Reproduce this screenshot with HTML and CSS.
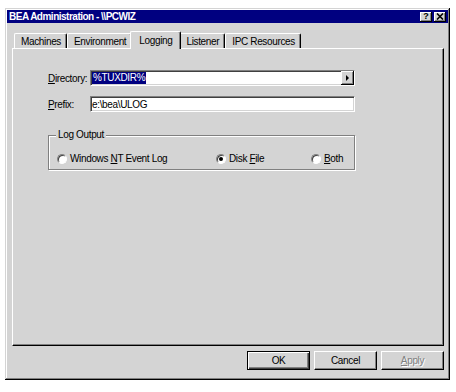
FILE: index.html
```html
<!DOCTYPE html>
<html lang="en">
<head>
  <meta charset="UTF-8" />
  <title>BEA Administration</title>
  <link rel="stylesheet" href="styles.css">
</head>
<body>

  <div class="window">
    <div class="titlebar">
      <span>BEA Administration - \\PCWIZ</span>
      <div class="title-btns">
        <span class="tbtn">?</span>
        <span class="tbtn">
          <svg width="8" height="7" viewBox="0 0 8 7"><path d="M1 0.5 L7 6.5 M7 0.5 L1 6.5" stroke="#000" stroke-width="1.6"/></svg>
        </span>
      </div>
    </div>

    <div class="content">
      <div class="tabs">
        <div class="tab">Machines</div>
        <div class="tab">Environment</div>
        <div class="tab active">Logging</div>
        <div class="tab">Listener</div>
        <div class="tab">IPC Resources</div>
      </div>

      <div class="panel">
        <div class="row">
          <span class="label"><u>D</u>irectory:</span>
          <div class="field">
            <span class="sel">%TUXDIR%</span>
            <span class="drop"><span class="arrow"></span></span>
          </div>
        </div>
        <div class="row">
          <span class="label"><u>P</u>refix:</span>
          <div class="field">e:\bea\ULOG</div>
        </div>

        <div class="group">
          <span class="legend">Log Output</span>
          <label class="opt"><span class="radio"></span><span>Windows <u>N</u>T Event Log</span></label>
          <label class="opt"><span class="radio checked"></span><span>Disk <u>F</u>ile</span></label>
          <label class="opt"><span class="radio"></span><span><u>B</u>oth</span></label>
        </div>
      </div>

      <div class="actions">
        <button class="btn default">OK</button>
        <button class="btn">Cancel</button>
        <button class="btn disabled"><u>A</u>pply</button>
      </div>
    </div>
  </div>

</body>
</html>
```

FILE: styles.css
```css
* { margin: 0; padding: 0; box-sizing: border-box; }
body { background: #fff; font-family: 'Liberation Sans', Arial, sans-serif; font-size: 10px; letter-spacing: -0.35px; color: #000; }

.window {
  width: 445px; height: 372px; margin: 8px 0 0 5px; padding: 2px; background: #d4d4d4;
  box-shadow: inset -1px -1px #000, inset 1px 1px #d4d4d4, inset -2px -2px #808080, inset 2px 2px #fff;
  display: flex; flex-direction: column;
}
.titlebar {
  height: 13px; background: #000080; color: #fff; font-weight: bold; padding: 0 2px 0 2px;
  display: flex; align-items: center; justify-content: space-between; letter-spacing: -0.5px;
}
.title-btns { display: flex; gap: 2px; }
.tbtn {
  width: 12px; height: 10px; background: #d4d4d4; color: #000; font-size: 9px; line-height: 1; letter-spacing: 0;
  box-shadow: inset -1px -1px #000, inset 1px 1px #fff, inset -2px -2px #808080;
  display: flex; align-items: center; justify-content: center;
}

.content { flex: 1; display: flex; flex-direction: column; padding: 8px 4px 0 5px; }

.tabs { display: flex; align-items: flex-end; height: 17px; padding-left: 2px; position: relative; z-index: 1; }
.tab {
  height: 15px; padding: 0 5px 0 6px; border: 1px solid #fff; border-right-color: #000; border-bottom: 0;
  border-radius: 2px 2px 0 0; box-shadow: inset -1px 0 #808080; background: #d4d4d4;
  display: flex; align-items: center;
}
.tab.active { height: 18px; margin: 0 -2px -1px; padding: 0 8px; position: relative; z-index: 1; }

.panel {
  height: 298px; background: #d4d4d4; padding: 21px 0 0 35px;
  border: 1px solid; border-color: #fff #000 #000 #fff; box-shadow: inset -1px -1px #808080;
}

.row { display: flex; align-items: center; height: 16px; }
.row + .row { margin-top: 10px; }
.label { width: 42px; }
.field {
  width: 265px; height: 16px; background: #fff; padding-left: 1px;
  border: 1px solid; border-color: #808080 #fff #fff #808080;
  box-shadow: inset 1px 1px #404040, inset -1px -1px #d4d4d4;
  display: flex; align-items: center;
}
.sel { background: #000080; color: #fff; padding: 0 1px; line-height: 12px; }
.drop {
  margin-left: auto; width: 13px; height: 14px; background: #d4d4d4;
  box-shadow: inset -1px -1px #000, inset 1px 1px #fff, inset -2px -2px #808080;
  display: flex; align-items: center; justify-content: center;
}
.arrow { border-left: 3px solid #000; border-top: 3px solid transparent; border-bottom: 3px solid transparent; }

.group {
  position: relative; width: 307px; height: 35px; margin-top: 23px; padding: 12px 0 0 8px;
  border: 1px solid #808080; box-shadow: 1px 1px #fff, inset 1px 1px #fff;
  display: grid; grid-template-columns: 159px 95px auto; align-items: center;
}
.legend { position: absolute; top: -7px; left: 7px; padding: 0 2px; background: #d4d4d4; line-height: 12px; }
.opt { display: flex; align-items: center; gap: 3px; height: 11px; }
.radio {
  width: 10px; height: 10px; border-radius: 50%; background: #fff; position: relative;
  border: 1px solid; border-color: #808080 #fff #fff #808080; box-shadow: inset 1px 1px #404040;
}
.radio.checked::after {
  content: ""; position: absolute; left: 2px; top: 2px; width: 4px; height: 4px;
  border-radius: 50%; background: #000;
}

.actions { display: flex; justify-content: flex-end; gap: 4px; margin-top: 5px; }
.btn {
  width: 63px; height: 19px; background: #d4d4d4; font-family: inherit; font-size: 10px; color: #000;
  letter-spacing: inherit;
  border: 1px solid; border-color: #fff #000 #000 #fff; box-shadow: inset -1px -1px #808080;
}
.btn.default { border-color: #000; box-shadow: inset 1px 1px #fff, inset -1px -1px #404040, inset -2px -2px #808080; }
.btn.disabled { color: #808080; text-shadow: 1px 1px #fff; }
```
